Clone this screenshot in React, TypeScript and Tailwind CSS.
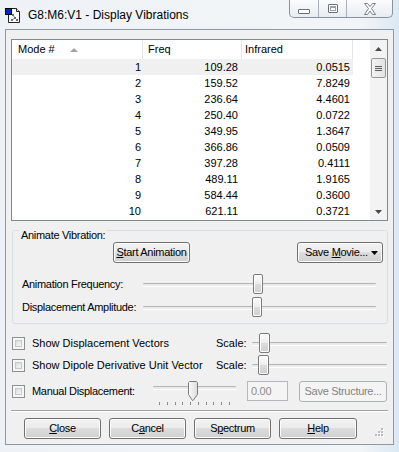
import React from 'react';

const modes: [number, string, string][] = [
  [1, '109.28', '0.0515'],
  [2, '159.52', '7.8249'],
  [3, '236.64', '4.4601'],
  [4, '250.40', '0.0722'],
  [5, '349.95', '1.3647'],
  [6, '366.86', '0.0509'],
  [7, '397.28', '0.4111'],
  [8, '489.11', '1.9165'],
  [9, '584.44', '0.3600'],
  [10, '621.11', '0.3721'],
];

// Win7 push button
function WinButton({
  children,
  className = '',
  disabled = false,
}: {
  children: React.ReactNode;
  className?: string;
  disabled?: boolean;
}) {
  const look = disabled
    ? 'border-[#adb2b5] bg-[#f4f4f4] text-[#838383]'
    : 'border-[#707070] bg-[linear-gradient(#f2f2f2_0%,#ebebeb_50%,#dddddd_50%,#cfcfcf_100%)] text-black shadow-[inset_0_0_0_1px_#fcfcfc]';
  return (
    <div className={`flex h-[21px] items-center justify-center rounded-[3px] border leading-[13px] ${look} ${className}`}>
      {children}
    </div>
  );
}

function Thumb({ className = '' }: { className?: string }) {
  return (
    <div
      className={`absolute top-0 h-[20px] rounded-[2px] border border-[#7b7b7b] bg-[linear-gradient(#fbfbfb_0%,#ececec_50%,#dcdcdc_50%,#d0d0d0_100%)] shadow-[inset_0_0_0_1px_#ffffff] ${className}`}
    />
  );
}

function Channel() {
  return <div className="h-[3px] w-full rounded-[1px] border-t border-[#b4b4b4] bg-[#e9eaea] shadow-[0_1px_0_#ffffff]" />;
}

function CheckBox() {
  return (
    <div className="h-[13px] w-[13px] shrink-0 border border-[#8e8f8f] bg-[#f6f6f6] p-[2px]">
      <div className="h-full w-full border border-[#c6c9cc] bg-[linear-gradient(135deg,#dadcde,#f5f5f5)]" />
    </div>
  );
}

function DocIcon() {
  return (
    <svg width="17" height="17" viewBox="0 0 17 17">
      <path d="M3.5 1.5h8l3 3v11h-11z" fill="#fff" stroke="#222" />
      <path d="M11.5 1.5v3h3" fill="#e8e8e8" stroke="#222" />
      <g stroke="#8a8a8a" strokeWidth="1">
        <path d="M8 8l2 3M10 11l-3 2M10 11l2 2" />
      </g>
      <g fill="#6f6f6f">
        <rect x="7" y="7" width="2" height="2" />
        <rect x="9" y="10" width="2" height="2" />
        <rect x="6" y="12" width="2" height="2" />
        <rect x="11" y="12" width="2" height="2" />
      </g>
      <rect x="0.5" y="1.5" width="6" height="6" fill="#0a1ee0" stroke="#000" />
    </svg>
  );
}

function CaptionButtons() {
  return (
    <div className="ml-auto mr-[6px] flex h-[18px] overflow-hidden rounded-b-[5px] border border-t-0 border-[#8a929d] bg-[linear-gradient(#fbfcfd,#e8ecf1)]">
      <div className="flex w-[28px] justify-center pt-[9px]">
        <div className="h-[5px] w-[12px] rounded-[1px] border border-[#6a7078] bg-white" />
      </div>
      <div className="flex w-[28px] justify-center border-l border-[#a9b0b9] pt-[4px]">
        <div className="h-[9px] w-[10px] rounded-[1px] border border-[#6a7078] bg-white p-[1px]">
          <div className="h-full w-full border border-t-2 border-[#9aa0a8]" />
        </div>
      </div>
      <div className="flex w-[46px] justify-center border-l border-[#a9b0b9] pt-[3px]">
        <svg width="14" height="12" viewBox="0 0 14 12">
          <path
            d="M1.5 0.5h3l2.5 3 2.5-3h3l-4 5 4 6h-3l-2.5-3.5-2.5 3.5h-3l4-6z"
            fill="#fdfdfd"
            stroke="#7a8089"
            strokeLinejoin="round"
          />
        </svg>
      </div>
    </div>
  );
}

function Scrollbar() {
  return (
    <div className="flex w-[17px] flex-col bg-[#f3f3f3]">
      <div className="flex h-[17px] items-center justify-center">
        <svg width="7" height="4" viewBox="0 0 7 4">
          <path d="M3.5 0L7 4H0z" fill="#4a4a4a" />
        </svg>
      </div>
      <div className="ml-[1px] mt-[1px] flex h-[20px] w-[15px] flex-col items-center justify-center gap-[1px] rounded-[2px] border border-[#979797] bg-[linear-gradient(90deg,#f2f2f2,#e3e3e3)]">
        <div className="h-px w-[7px] bg-[#5b5b5b]" />
        <div className="h-px w-[7px] bg-[#5b5b5b]" />
        <div className="h-px w-[7px] bg-[#5b5b5b]" />
      </div>
      <div className="flex-1" />
      <div className="flex h-[17px] items-center justify-center">
        <svg width="7" height="4" viewBox="0 0 7 4">
          <path d="M0 0h7L3.5 4z" fill="#4a4a4a" />
        </svg>
      </div>
    </div>
  );
}

function ModeList() {
  return (
    <div className="mx-[5px] mt-[9px] flex h-[182px] border border-[#828790] bg-white">
      <div className="flex flex-1 flex-col">
        <div className="flex h-[19px] items-center">
          <div className="flex h-full w-[131px] items-center border-r border-[#e5e5e5] pl-[6px]">
            <span>Mode #</span>
            <svg className="ml-[15px]" width="8" height="4" viewBox="0 0 8 4">
              <path d="M4 0L8 4H0z" fill="#a3a3a3" />
            </svg>
          </div>
          <div className="flex h-full w-[99px] items-center border-r border-[#e5e5e5] pl-[5px]">Freq</div>
          <div className="flex h-full w-[111px] items-center border-r border-[#e5e5e5] pl-[3px]">Infrared</div>
          <div className="h-full flex-1" />
        </div>
        {modes.map(([n, freq, ir]) => (
          <div key={n} className="flex h-[16px] leading-[16px]">
            <div className={`flex ${n === 1 ? 'bg-[#f0f0f0]' : ''}`}>
              <div className="w-[131px] pr-[2px] text-right">{n}</div>
              <div className="w-[99px] pr-[4px] text-right">{freq}</div>
              <div className="w-[111px] pr-[3px] text-right">{ir}</div>
            </div>
          </div>
        ))}
      </div>
      <Scrollbar />
    </div>
  );
}

function AnimateGroup() {
  return (
    <div className="ml-[6px] mt-[9px] flex h-[94px] w-[376px] flex-col rounded-[3px] border border-[#d5dfe5] tracking-[-0.3px]">
      <div className="-mt-[2px] flex h-[12px]">
        <span className="ml-[6px] bg-[#f0f0f0] px-[2px] leading-[12px]">Animate Vibration:</span>
      </div>
      <div className="mt-[1px] flex">
        <WinButton className="ml-[100px] w-[77px]">
          <span>
            <u>S</u>tart Animation
          </span>
        </WinButton>
        <WinButton className="ml-auto mr-[4px] w-[86px] justify-start pl-[7px]">
          <span>
            Save <u>M</u>ovie...
          </span>
          <svg className="ml-[3px]" width="7" height="4" viewBox="0 0 7 4">
            <path d="M0 0h7L3.5 4z" fill="#000" />
          </svg>
        </WinButton>
      </div>
      <div className="mt-[11px] flex h-[20px] items-center">
        <div className="w-[130px] pl-[9px]">Animation Frequency:</div>
        <div className="relative flex h-[20px] w-[233px] items-center">
          <Channel />
          <Thumb className="left-[110px] w-[10px]" />
        </div>
      </div>
      <div className="mt-[3px] flex h-[20px] items-center">
        <div className="w-[130px] pl-[9px]">Displacement Amplitude:</div>
        <div className="relative flex h-[20px] w-[233px] items-center">
          <Channel />
          <Thumb className="left-[109px] w-[10px]" />
        </div>
      </div>
    </div>
  );
}

function ScaleRow({ label, thumbLeft, mt }: { label: string; thumbLeft: string; mt: string }) {
  return (
    <div className={`ml-[6px] flex h-[20px] items-center ${mt}`}>
      <CheckBox />
      <div className="ml-[7px] w-[184px]">{label}</div>
      <div className="w-[36px]">Scale:</div>
      <div className="relative flex h-[20px] w-[135px] items-center">
        <Channel />
        <Thumb className={`${thumbLeft} w-[11px] -top-px h-[18px]`} />
      </div>
    </div>
  );
}

function ManualRow() {
  return (
    <div className="ml-[6px] mt-[6px] flex h-[24px] items-start">
      <div className="flex h-[20px] items-center">
        <CheckBox />
        <div className="ml-[7px] w-[121px]">Manual Displacement:</div>
      </div>
      <div className="flex w-[83px] flex-col">
        <div className="relative h-[20px]">
          <div className="pt-[5px]">
            <Channel />
          </div>
          <svg className="absolute left-[35px] top-0" width="10" height="20" viewBox="0 0 10 20">
            <defs>
              <linearGradient id="pt" x1="0" x2="1" y1="0" y2="0">
                <stop offset="0" stopColor="#fbfbfb" />
                <stop offset="1" stopColor="#dcdcdc" />
              </linearGradient>
            </defs>
            <path d="M1.5 0.5h7l1 1v12l-4.5 6h-0.5l-4-6v-12z" fill="url(#pt)" stroke="#7b7b7b" />
          </svg>
        </div>
        <div className="flex justify-between px-[6px] pt-px">
          {Array.from({ length: 10 }).map((_, i) => (
            <div key={i} className="h-[3px] w-px bg-[#8a8a8a]" />
          ))}
        </div>
      </div>
      <div className="ml-[11px] flex h-[20px] w-[41px] items-center border border-[#b5b9bd] bg-[#f4f4f4] pl-[3px] text-[#8d8d8d]">
        0.00
      </div>
      <WinButton disabled className="ml-[11px] w-[88px]">
        Save Structure...
      </WinButton>
    </div>
  );
}

function Grip() {
  return (
    <svg className="ml-auto mr-[9px] mt-[10px]" width="9" height="9" viewBox="0 0 9 9">
      <g fill="#fff">
        <rect x="7" y="1" width="2" height="2" />
        <rect x="4" y="4" width="2" height="2" />
        <rect x="7" y="4" width="2" height="2" />
        <rect x="1" y="7" width="2" height="2" />
        <rect x="4" y="7" width="2" height="2" />
        <rect x="7" y="7" width="2" height="2" />
      </g>
      <g fill="#b8bcc0">
        <rect x="6" y="0" width="2" height="2" />
        <rect x="3" y="3" width="2" height="2" />
        <rect x="6" y="3" width="2" height="2" />
        <rect x="0" y="6" width="2" height="2" />
        <rect x="3" y="6" width="2" height="2" />
        <rect x="6" y="6" width="2" height="2" />
      </g>
    </svg>
  );
}

export default function App() {
  return (
    <div className="flex h-[452px] w-[399px] flex-col overflow-hidden bg-[linear-gradient(90deg,#eef2f6_0%,#f2f5f8_90%,#dbe8f3_100%)] font-['Liberation_Sans',Arial,sans-serif] text-[11px] text-black">
      {/* title bar */}
      <div className="flex h-[29px] shrink-0 items-start">
        <div className="ml-[5px] mt-[7px]">
          <DocIcon />
        </div>
        <div className="ml-[6px] mt-[8px] text-[12px] leading-[14px]">G8:M6:V1 - Display Vibrations</div>
        <CaptionButtons />
      </div>

      {/* client area */}
      <div className="mx-[5px] flex h-[416px] shrink-0 flex-col border border-[#8f99a4] bg-[#f0f0f0]">
        <ModeList />
        <AnimateGroup />
        <ScaleRow label="Show Displacement Vectors" thumbLeft="left-[7px]" mt="mt-[9px]" />
        <ScaleRow label="Show Dipole Derivative Unit Vector" thumbLeft="left-[6px]" mt="mt-[2px]" />
        <div className="tracking-[-0.3px]">
          <ManualRow />
        </div>
        <div className="ml-[5px] mt-[5px] h-[2px] w-[377px] border-t border-b border-t-[#a0a0a0] border-b-white" />
        <div className="mt-[6px] flex items-start tracking-[-0.3px]">
          <WinButton className="ml-[18px] w-[77px]">
            <span>
              <u>C</u>lose
            </span>
          </WinButton>
          <WinButton className="ml-[8px] w-[77px]">
            <span>
              C<u>a</u>ncel
            </span>
          </WinButton>
          <WinButton className="ml-[8px] w-[77px]">
            <span>
              S<u>p</u>ectrum
            </span>
          </WinButton>
          <WinButton className="ml-[8px] w-[78px]">
            <span>
              <u>H</u>elp
            </span>
          </WinButton>
          <Grip />
        </div>
      </div>
    </div>
  );
}
